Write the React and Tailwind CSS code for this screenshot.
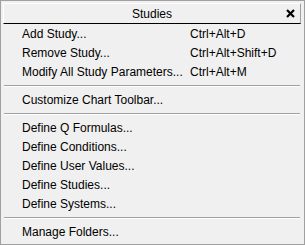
export default function App() {
  const Row = ({ label, keys }) => (
    <div className="flex h-[19px] items-center whitespace-nowrap">
      <span className="w-[187px] flex-none pl-[19px]">{label}</span>
      <span>{keys}</span>
    </div>
  )

  const Sep = () => (
    <div className="flex h-[9px] flex-col justify-center px-[1px]">
      <div className="h-px bg-[#a0a0a0]" />
      <div className="h-px bg-white" />
    </div>
  )

  return (
    <div
      className="h-[245px] w-[305px] overflow-hidden border border-[#a0a0a0] bg-[#f0f0f0] pl-[2px] pr-[3px] pt-[2px] text-[12px] leading-none text-black"
      style={{ fontFamily: '"Liberation Sans", Arial, sans-serif' }}
    >
      {/* title bar */}
      <div className="relative flex h-[21px] items-center justify-center border-b border-l border-r border-t border-b-black border-l-white border-r-[#a0a0a0] border-t-white">
        <span>Studies</span>
        <svg
          className="absolute right-[5px] top-[5px]"
          width="9"
          height="9"
          viewBox="0 0 9 9"
        >
          <path d="M1 1 L8 8 M8 1 L1 8" stroke="black" strokeWidth="2.2" />
        </svg>
      </div>

      <Row label="Add Study..." keys="Ctrl+Alt+D" />
      <Row label="Remove Study..." keys="Ctrl+Alt+Shift+D" />
      <Row label="Modify All Study Parameters..." keys="Ctrl+Alt+M" />
      <Sep />
      <Row label="Customize Chart Toolbar..." />
      <Sep />
      <Row label="Define Q Formulas..." />
      <Row label="Define Conditions..." />
      <Row label="Define User Values..." />
      <Row label="Define Studies..." />
      <Row label="Define Systems..." />
      <Sep />
      <Row label="Manage Folders..." />
    </div>
  )
}
